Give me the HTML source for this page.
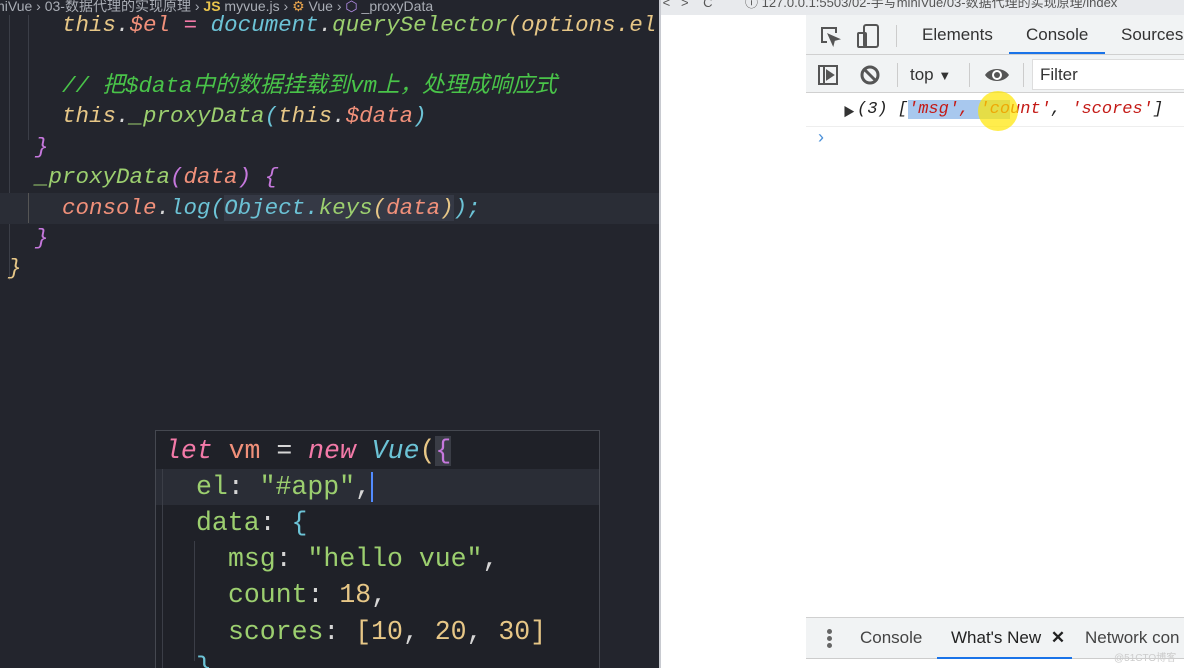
<!DOCTYPE html>
<html><head><meta charset="utf-8"><style>
*{margin:0;padding:0;box-sizing:border-box}
body{width:1184px;height:668px;overflow:hidden;background:#fff;position:relative;font-family:"Liberation Sans","Noto Sans CJK SC",sans-serif}
.ed{position:absolute;left:0;top:0;width:659px;height:668px;background:#23252d;overflow:hidden}
.bc{position:absolute;top:-4px;left:-3px;font-size:14px;color:#a9adb5;white-space:nowrap}
.code{position:absolute;left:0;top:0;font-family:"Liberation Mono","Noto Sans CJK SC",monospace;font-style:italic;font-size:22.5px;white-space:pre}
.l{position:absolute;height:30px;line-height:30px}
.y{color:#e7c787}.o{color:#f0907a}.c{color:#6cc3d6}.g{color:#9ccf6f}.p{color:#c678dd}.w{color:#d6d6d6}.pk{color:#f37aa8}.cm{color:#49c449}
.guide{position:absolute;width:1px;background:#3b3e47}
.pop{position:absolute;left:155px;top:430px;width:445px;height:250px;background:#1f2128;border:1px solid #454850;font-family:"Liberation Mono",monospace;font-size:26.5px;white-space:pre}
.pl{position:absolute;left:9px;height:36px;line-height:36px}
.dv{position:absolute;left:806px;top:15px;width:378px;height:653px;background:#fff}
.tb{position:absolute;left:0;width:378px;background:#f1f3f4;border-bottom:1px solid #d0d0d0}
.tt{position:absolute;font-size:17px;color:#333;white-space:nowrap}
</style></head><body>
<div class="ed">
  <div class="bc">niVue › 03-数据代理的实现原理 › <span style="color:#e8c34c;font-weight:bold">JS</span> myvue.js › <span style="color:#e8a44c">⚙</span> Vue › <span style="color:#b48ee8">⬡</span> _proxyData</div>
  <div class="guide" style="left:9px;top:15px;height:265px"></div>
  <div class="guide" style="left:28px;top:15px;height:125px"></div>
  <div style="position:absolute;left:0;top:193px;width:659px;height:31px;background:#2a2d36"></div>
  <div class="guide" style="left:28px;top:193px;height:30px;background:#555"></div>
  <div class="code">
    <div class="l" style="left:62px;top:10px"><span class="y">this</span><span class="w">.</span><span class="o">$el</span> <span class="pk">=</span> <span class="c">document</span><span class="w">.</span><span class="g">querySelector</span><span class="y">(options.el</span></div>
    <div class="l" style="left:62px;top:71px"><span class="cm">// 把$data中的数据挂载到vm上，处理成响应式</span></div>
    <div class="l" style="left:62px;top:101px"><span class="y">this</span><span class="w">.</span><span class="g">_proxyData</span><span class="c">(</span><span class="y">this</span><span class="w">.</span><span class="o">$data</span><span class="c">)</span></div>
    <div class="l" style="left:35px;top:132px"><span class="p">}</span></div>
    <div class="l" style="left:35px;top:162px"><span class="g">_proxyData</span><span class="p">(</span><span class="o">data</span><span class="p">)</span> <span class="p">{</span></div>
    <div class="l" style="left:62px;top:193px"><span class="o">console</span><span class="w">.</span><span class="c">log</span><span class="c">(</span><span class="c" style="background:#353945">Object.</span><span class="g" style="background:#353945">keys</span><span class="y" style="background:#353945">(</span><span class="o" style="background:#353945">data</span><span class="y" style="background:#353945">)</span><span class="c">);</span></div>
    <div class="l" style="left:35px;top:223px"><span class="p">}</span></div>
    <div class="l" style="left:8px;top:253px"><span class="y">}</span></div>
  </div>
  <div class="pop">
    <div style="position:absolute;left:0;top:38px;width:443px;height:36px;background:#2a2d36"></div>
    <div class="guide" style="left:6px;top:38px;height:220px"></div>
    <div class="guide" style="left:38px;top:110px;height:120px"></div>
    <div class="pl" style="top:2px"><span class="pk" style="font-style:italic">let</span> <span class="o">vm</span> <span class="w">=</span> <span class="pk" style="font-style:italic">new</span> <span class="c" style="font-style:italic">Vue</span><span class="y">(</span><span class="p" style="background:#3a3d46">{</span></div>
    <div class="pl" style="left:40px;top:38px"><span class="g">el</span><span class="w">: </span><span class="g">"#app"</span><span class="w">,</span><span style="display:inline-block;width:2px;height:30px;background:#528bff;vertical-align:middle"></span></div>
    <div class="pl" style="left:40px;top:74px"><span class="g">data</span><span class="w">: </span><span class="c">{</span></div>
    <div class="pl" style="left:72px;top:110px"><span class="g">msg</span><span class="w">: </span><span class="g">"hello vue"</span><span class="w">,</span></div>
    <div class="pl" style="left:72px;top:146px"><span class="g">count</span><span class="w">: </span><span class="y">18</span><span class="w">,</span></div>
    <div class="pl" style="left:72px;top:183px"><span class="g">scores</span><span class="w">: </span><span class="y">[10</span><span class="w">, </span><span class="y">20</span><span class="w">, </span><span class="y">30]</span></div>
    <div class="pl" style="left:40px;top:219px"><span class="c">}</span></div>
  </div>
</div>
<div style="position:absolute;left:659px;top:0;width:525px;height:15px;background:#e8eaed;font-size:13px;color:#555;white-space:nowrap;overflow:hidden;line-height:6px">&nbsp;&lt; &nbsp;&nbsp;&gt; &nbsp;&nbsp;&nbsp;C &nbsp;&nbsp;&nbsp;&nbsp;&nbsp;&nbsp;&nbsp;&nbsp;ⓘ 127.0.0.1:5503/02-手写miniVue/03-数据代理的实现原理/index</div>
<div style="position:absolute;left:659px;top:0;width:2px;height:668px;background:#c8cad0"></div>
<div class="dv">
  <div class="tb" style="top:0;height:40px">
    <svg style="position:absolute;left:13px;top:10px" width="22" height="22" viewBox="0 0 22 22" fill="none" stroke="#555" stroke-width="2"><path d="M8 17H3V3h14v5"/><path d="M10 10l9 4-4 1-1 4z" fill="#555"/></svg>
    <svg style="position:absolute;left:50px;top:8px" width="24" height="26" viewBox="0 0 24 26" fill="none" stroke="#555" stroke-width="2"><rect x="8" y="2" width="14" height="22" rx="2"/><rect x="2" y="10" width="8" height="14" rx="1"/></svg>
    <div style="position:absolute;left:90px;top:10px;width:1px;height:22px;background:#ccc"></div>
    <div class="tt" style="left:116px;top:10px">Elements</div>
    <div class="tt" style="left:220px;top:10px">Console</div>
    <div style="position:absolute;left:203px;top:37px;width:96px;height:2px;background:#1a73e8"></div>
    <div class="tt" style="left:315px;top:10px">Sources</div>
  </div>
  <div class="tb" style="top:40px;height:38px">
    <svg style="position:absolute;left:11px;top:9px" width="22" height="22" viewBox="0 0 22 22" fill="none" stroke="#555" stroke-width="2"><rect x="2" y="2" width="18" height="18"/><path d="M7 2v18"/><path d="M10 7l6 4-6 4z" fill="#555"/></svg>
    <svg style="position:absolute;left:53px;top:9px" width="22" height="22" viewBox="0 0 22 22" fill="none" stroke="#555" stroke-width="3"><circle cx="11" cy="11" r="8"/><path d="M5 5l12 12"/></svg>
    <div style="position:absolute;left:91px;top:8px;width:1px;height:24px;background:#ccc"></div>
    <div class="tt" style="left:104px;top:10px">top <span style="font-size:13px">▼</span></div>
    <div style="position:absolute;left:163px;top:8px;width:1px;height:24px;background:#ccc"></div>
    <svg style="position:absolute;left:178px;top:10px" width="26" height="20" viewBox="0 0 26 20"><path d="M1 10C6 2 20 2 25 10C20 18 6 18 1 10z" fill="#555"/><circle cx="13" cy="10" r="5" fill="#fff"/><circle cx="13" cy="10" r="3" fill="#555"/></svg>
    <div style="position:absolute;left:217px;top:8px;width:1px;height:24px;background:#ccc"></div>
    <div style="position:absolute;left:226px;top:4px;width:160px;height:31px;background:#fff;border:1px solid #ddd"></div>
    <div class="tt" style="left:234px;top:10px">Filter</div>
  </div>
  <div style="position:absolute;left:0;top:78px;width:378px;height:34px;border-bottom:1px solid #eee"></div>
  <div style="position:absolute;left:37px;top:88px;font-size:12px;color:#333">▶</div>
  <div style="position:absolute;left:51px;top:78px;height:34px;line-height:34px;font-family:'Liberation Mono',monospace;font-style:italic;font-size:17px;white-space:pre;color:#222">(3) [<span style="color:#c41a16;background:#a8c8ee">'msg', </span><span style="color:#c41a16"><span style="background:#a8c8ee">'co</span>unt'</span>, <span style="color:#c41a16">'scores'</span>]</div>
  <div style="position:absolute;left:172px;top:76px;width:40px;height:40px;border-radius:50%;background:rgba(255,230,0,.7)"></div>
  <div style="position:absolute;left:12px;top:112px;color:#4a90d9;font-size:18px">›</div>
  <div style="position:absolute;left:0;top:602px;width:378px;height:42px;background:#f1f3f4;border-top:1px solid #d0d0d0;border-bottom:1px solid #ccc">
    <div style="position:absolute;left:21px;top:11px;width:5px;height:5px;border-radius:50%;background:#666;box-shadow:0 7px 0 #666,0 14px 0 #666"></div>
    <div class="tt" style="left:54px;top:10px;color:#444">Console</div>
    <div class="tt" style="left:145px;top:10px;color:#222">What's New <b style="margin-left:5px">✕</b></div>
    <div style="position:absolute;left:131px;top:39px;width:135px;height:2px;background:#1a73e8"></div>
    <div class="tt" style="left:279px;top:10px;color:#444">Network con</div>
  </div>
  <div style="position:absolute;left:308px;top:634px;font-size:10px;color:#ccc">@51CTO博客</div>
</div>
</body></html>
